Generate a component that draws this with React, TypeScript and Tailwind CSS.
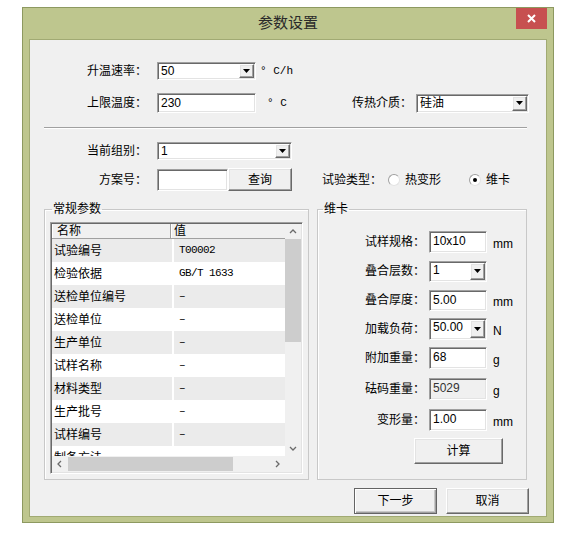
import type { ReactNode } from 'react';

// classic 3D edges
const sunken =
  'border border-t-[#a0a0a0] border-l-[#a0a0a0] border-r-white border-b-white shadow-[inset_1px_1px_0_#696969,inset_-1px_-1px_0_#e3e3e3]';
const raised =
  'border border-t-white border-l-white border-r-[#696969] border-b-[#696969] shadow-[inset_-1px_-1px_0_#a0a0a0,inset_1px_1px_0_#e3e3e3] bg-[#f0f0f0]';
const mono = "font-['Liberation_Mono','Noto_Sans_CJK_SC',monospace]";

function DropArrow() {
  return (
    <span className={`${raised} flex w-[15px] shrink-0 items-center justify-center self-stretch`}>
      <svg width="7" height="4" viewBox="0 0 7 4">
        <polygon points="0,0 7,0 3.5,4" fill="#000" />
      </svg>
    </span>
  );
}

function Combo({ w, h, value, className = '' }: { w: number; h: number; value: string; className?: string }) {
  return (
    <div className={`${sunken} ${className} flex bg-white p-[1px]`} style={{ width: w, height: h }}>
      <span className="flex-1 pl-[2px] leading-[14px]">{value}</span>
      <DropArrow />
    </div>
  );
}

function Field({ w, h, value = '', grey = false, className = '' }: { w: number; h: number; value?: string; grey?: boolean; className?: string }) {
  return (
    <div
      className={`${sunken} ${className} pl-[3px] pt-[2px] leading-[14px] ${grey ? 'bg-[#f0f0f0] text-[#333]' : 'bg-white'}`}
      style={{ width: w, height: h }}
    >
      {value}
    </div>
  );
}

function Radio({ checked }: { checked?: boolean }) {
  return (
    <span className="flex h-[12px] w-[12px] items-center justify-center rounded-full border border-t-[#a0a0a0] border-l-[#a0a0a0] border-r-[#e3e3e3] border-b-[#e3e3e3] bg-white">
      {checked && <span className="h-[4px] w-[4px] rounded-full bg-black" />}
    </span>
  );
}

function Chevron({ dir }: { dir: 'up' | 'down' | 'left' | 'right' }) {
  const d = {
    up: 'M1 5 L4 2 L7 5',
    down: 'M1 2 L4 5 L7 2',
    left: 'M5 1 L2 4 L5 7',
    right: 'M3 1 L6 4 L3 7',
  }[dir];
  return (
    <svg width="8" height="8" viewBox="0 0 8 8">
      <path d={d} fill="none" stroke="#6a6a6a" strokeWidth="1.3" />
    </svg>
  );
}

const rows: [string, string][] = [
  ['试验编号', 'T00002'],
  ['检验依据', 'GB/T 1633'],
  ['送检单位编号', '–'],
  ['送检单位', '–'],
  ['生产单位', '–'],
  ['试样名称', '–'],
  ['材料类型', '–'],
  ['生产批号', '–'],
  ['试样编号', '–'],
  ['制备方法', '–'],
];

function ParamList() {
  return (
    <div className={`${sunken} flex h-[252px] flex-col bg-white p-[1px]`}>
      <div className="flex min-h-0 flex-1">
        <div className="min-w-0 flex-1 overflow-hidden">
          <div className="flex h-[15px] bg-[#f0f0f0] leading-[14px]">
            <span className="w-[119px] border-r border-b border-r-[#a0a0a0] border-b-[#a0a0a0] pl-[5px] shadow-[inset_1px_0_0_#fff]">名称</span>
            <span className="flex-1 border-b border-b-[#a0a0a0] pl-[3px] shadow-[inset_1px_0_0_#fff]">值</span>
          </div>
          {rows.map(([name, val], i) => (
            <div key={name} className={`flex h-[23px] items-center ${i % 2 === 0 ? 'bg-[#ebebeb]' : 'bg-white'}`}>
              <span className="w-[120px] pl-[2px]">{name}</span>
              <span className={`${mono} flex h-full flex-1 items-center border-l-2 border-white pl-[5px] text-[11px] tracking-[-0.6px]`}>{val}</span>
            </div>
          ))}
        </div>
        <div className="flex w-[16px] flex-col bg-[#f0f0f0]">
          <span className="flex h-[15px] items-center justify-center"><Chevron dir="up" /></span>
          <span className="h-[103px] bg-[#cdcdcd]" />
          <span className="flex-1" />
          <span className="flex h-[15px] items-center justify-center"><Chevron dir="down" /></span>
        </div>
      </div>
      <div className="flex h-[16px] bg-[#f0f0f0]">
        <span className="flex w-[16px] items-center justify-center"><Chevron dir="left" /></span>
        <span className="my-[1px] w-[165px] bg-[#cdcdcd]" />
        <span className="flex-1" />
        <span className="flex w-[16px] items-center justify-center"><Chevron dir="right" /></span>
        <span className="w-[16px]" />
      </div>
    </div>
  );
}

function VicatRow({ label, children, unit, className = '' }: { label: string; children: ReactNode; unit?: string; className?: string }) {
  return (
    <div className={`flex h-[22px] items-center ${className}`}>
      <span className="w-[107px] text-right">{label}</span>
      <div className="ml-[4px]">{children}</div>
      {unit && <span className="ml-[6px] mt-[4px]">{unit}</span>}
    </div>
  );
}

export default function App() {
  return (
    <div className="h-[535px] bg-white pl-[22px] pt-[7px] font-['Liberation_Sans','Noto_Sans_CJK_SC',sans-serif] text-[12px] text-black">
      <div className="w-[532px] border border-[#8d9960] bg-[#bec68e] px-[6px] pb-[5px]">
        <div className="-mx-[6px] grid h-[31px] grid-cols-[1fr_auto_1fr] items-center">
          <span />
          <span className="text-[15px] text-[#2a2a2a]">参数设置</span>
          <span className="mr-[6px] flex h-[21px] w-[31px] items-center justify-center self-start justify-self-end bg-[#c75050]">
            <svg width="9" height="9" viewBox="0 0 9 9">
              <path d="M1 1 L8 8 M8 1 L1 8" stroke="#fff" strokeWidth="2" />
            </svg>
          </span>
        </div>

        <div className="flex h-[478px] flex-col border border-[#a1aa73] bg-[#f0f0f0]">
          <div className="mt-[22px] flex items-center">
            <span className="w-[117px] text-right">升温速率：</span>
            <Combo className="ml-[10px]" w={99} h={18} value="50" />
            <span className={`${mono} ml-[4px] text-[11px]`}>° C/h</span>
          </div>

          <div className="mt-[13px] flex items-center pr-[17px]">
            <span className="w-[117px] text-right">上限温度：</span>
            <Field className="ml-[10px]" w={99} h={20} value="230" />
            <span className={`${mono} ml-[11px] text-[11px]`}>° C</span>
            <span className="ml-auto">传热介质：</span>
            <Combo className="ml-[4px]" w={113} h={19} value="硅油" />
          </div>

          <div className="ml-[14px] mr-[19px] mt-[14px] border-t border-b border-t-[#a0a0a0] border-b-white" />

          <div className="mt-[13px] flex items-center">
            <span className="w-[117px] text-right">当前组别：</span>
            <Combo className="ml-[10px]" w={135} h={18} value="1" />
          </div>

          <div className="mt-[8px] flex items-center">
            <span className="w-[117px] text-right">方案号：</span>
            <Field className="ml-[10px]" w={71} h={22} />
            <button className={`${raised} h-[23px] w-[64px]`}>查询</button>
            <span className="ml-[30px]">试验类型：</span>
            <span className="ml-[6px]"><Radio /></span>
            <span className="ml-[5px]">热变形</span>
            <span className="ml-[28px]"><Radio checked /></span>
            <span className="ml-[5px]">维卡</span>
          </div>

          <div className="ml-[14px] mt-[10px] flex gap-[8px]">
            <fieldset className="w-[265px] border border-[#c8c8c8] px-[5px] pb-[5px] shadow-[inset_1px_1px_0_#fff]">
              <legend className="ml-[2px] px-[1px] leading-[16px]">常规参数</legend>
              <div className="mt-[5px]">
                <ParamList />
              </div>
            </fieldset>

            <fieldset className="w-[210px] border border-[#c8c8c8] shadow-[inset_1px_1px_0_#fff]">
              <legend className="ml-[5px] px-[1px] leading-[16px]">维卡</legend>
              <div className="mt-[14px] flex flex-col gap-[7px]">
                <VicatRow label="试样规格：" unit="mm">
                  <Field w={58} h={22} value="10x10" />
                </VicatRow>
                <VicatRow label="叠合层数：">
                  <Combo w={58} h={21} value="1" />
                </VicatRow>
                <VicatRow label="叠合厚度：" unit="mm">
                  <Field w={58} h={21} value="5.00" />
                </VicatRow>
                <VicatRow label="加载负荷：" unit="N">
                  <Combo w={58} h={22} value="50.00" />
                </VicatRow>
                <VicatRow label="附加重量：" unit="g">
                  <Field w={58} h={22} value="68" />
                </VicatRow>
                <VicatRow className="mt-[2px]" label="砝码重量：" unit="g">
                  <Field w={58} h={22} value="5029" grey />
                </VicatRow>
                <VicatRow className="mt-[2px]" label="变形量：" unit="mm">
                  <Field w={58} h={22} value="1.00" />
                </VicatRow>
                <button className={`${raised} ml-[96px] h-[26px] w-[89px]`}>计算</button>
              </div>
            </fieldset>
          </div>

          <div className="mr-[17px] mt-[8px] flex justify-end gap-[9px]">
            <button className="h-[26px] w-[83px] border border-[#646464] bg-[#f0f0f0] shadow-[inset_1px_1px_0_#fff,inset_-1px_-1px_0_#a0a0a0,inset_-2px_-2px_0_#c8c8c8]">下一步</button>
            <button className={`${raised} h-[26px] w-[83px]`}>取消</button>
          </div>
        </div>
      </div>
    </div>
  );
}
